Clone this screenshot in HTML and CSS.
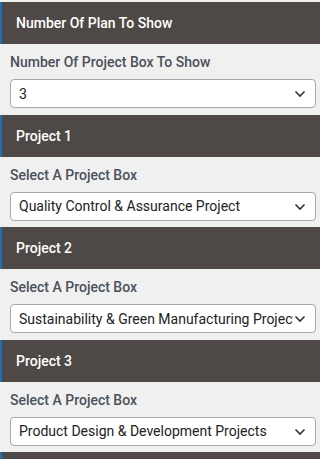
FILE: index.html
```html
<!DOCTYPE html>
<html lang="en">
<head>
    <meta charset="UTF-8">
    <meta name="viewport" content="width=device-width, initial-scale=1.0">
    <title>Project Boxes</title>
    <link rel="stylesheet" href="styles.css">
</head>
<body>
    <div class="panel">
        <div class="section-title">Number Of Plan To Show</div>
        <div class="field">
            <label for="count">Number Of Project Box To Show</label>
            <div class="select-wrap">
                <select id="count">
                    <option>1</option>
                    <option>2</option>
                    <option selected>3</option>
                </select>
                <svg class="chevron" width="12" height="8" viewBox="0 0 12 8"><path d="M1.5 1.5 L6 6 L10.5 1.5" fill="none" stroke="#333" stroke-width="1.6"/></svg>
            </div>
        </div>

        <div class="section-title">Project 1</div>
        <div class="field">
            <label for="p1">Select A Project Box</label>
            <div class="select-wrap">
                <select id="p1">
                    <option selected>Quality Control &amp; Assurance Project</option>
                </select>
                <svg class="chevron" width="12" height="8" viewBox="0 0 12 8"><path d="M1.5 1.5 L6 6 L10.5 1.5" fill="none" stroke="#333" stroke-width="1.6"/></svg>
            </div>
        </div>

        <div class="section-title">Project 2</div>
        <div class="field">
            <label for="p2">Select A Project Box</label>
            <div class="select-wrap">
                <select id="p2">
                    <option selected>Sustainability &amp; Green Manufacturing Projects</option>
                </select>
                <svg class="chevron" width="12" height="8" viewBox="0 0 12 8"><path d="M1.5 1.5 L6 6 L10.5 1.5" fill="none" stroke="#333" stroke-width="1.6"/></svg>
            </div>
        </div>

        <div class="section-title">Project 3</div>
        <div class="field">
            <label for="p3">Select A Project Box</label>
            <div class="select-wrap">
                <select id="p3">
                    <option selected>Product Design &amp; Development Projects</option>
                </select>
                <svg class="chevron" width="12" height="8" viewBox="0 0 12 8"><path d="M1.5 1.5 L6 6 L10.5 1.5" fill="none" stroke="#333" stroke-width="1.6"/></svg>
            </div>
        </div>

        <div class="section-title"></div>
    </div>
</body>
</html>
```

FILE: styles.css
```css
body {
    margin: 0;
    padding-top: 2px;
    background-color: #f0f0f0;
    font-family: Roboto, "Liberation Sans", Arial, sans-serif;
    font-size: 14px;
}
.section-title {
    height: 42px;
    display: flex;
    align-items: center;
    padding-left: 14px;
    border-left: 2px solid #1f6fb5;
    background-color: #4e4947;
    color: #ffffff;
    font-weight: 500;
    font-size: 14px;
}
.field {
    padding: 8px 4px 6.5px 10px;
}
label {
    display: block;
    line-height: 20px;
    margin-bottom: 7px;
    color: #4b5159;
    font-weight: 500;
}
.select-wrap {
    position: relative;
}
select {
    appearance: none;
    -webkit-appearance: none;
    width: 100%;
    height: 29px;
    padding: 0 22px 0 8px;
    border: 1px solid #a8a8a8;
    border-radius: 4px;
    background-color: #ffffff;
    color: #222222;
    font-family: Roboto, "Liberation Sans", Arial, sans-serif;
    font-size: 14px;
    box-sizing: border-box;
}
.chevron {
    position: absolute;
    right: 10px;
    top: 11px;
    pointer-events: none;
}
```
